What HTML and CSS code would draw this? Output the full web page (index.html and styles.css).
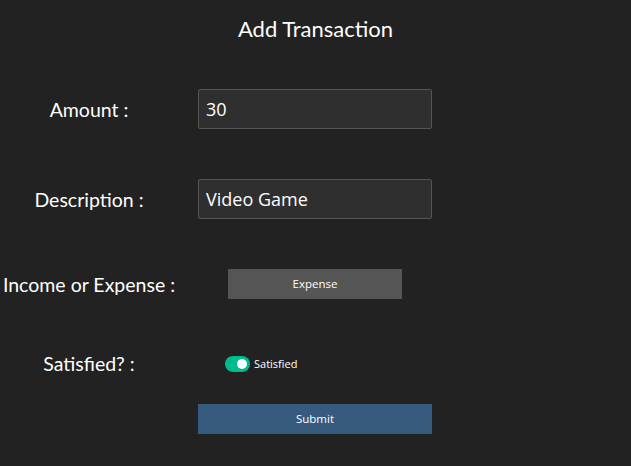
FILE: index.html
```html
<!DOCTYPE html>
<html>
<head>
<meta charset="utf-8">
<link rel="stylesheet" href="styles.css">
</head>
<body>
<div class="page">
  <h1 class="title">Add Transaction</h1>
  <div class="form">
    <div class="row row-amount">
      <div class="label">Amount :</div>
      <div class="field"><div class="input">30</div></div>
    </div>
    <div class="row row-desc">
      <div class="label">Description :</div>
      <div class="field"><div class="input">Video Game</div></div>
    </div>
    <div class="row row-type">
      <div class="label">Income or Expense :</div>
      <div class="field field-type"><div class="btn btn-secondary">Expense</div></div>
    </div>
    <div class="row row-sat">
      <div class="label">Satisfied? :</div>
      <div class="field field-sat">
        <span class="switch"><span class="knob"></span></span>
        <span class="switch-label">Satisfied</span>
      </div>
    </div>
    <div class="row row-submit">
      <div class="label"></div>
      <div class="field"><div class="btn btn-primary">Submit</div></div>
    </div>
  </div>
</div>
</body>
</html>
```

FILE: styles.css
```css
html, body {
  margin: 0;
  padding: 0;
  background: #222222;
  color: #ffffff;
  width: 631px;
  height: 466px;
  overflow: hidden;
}
.page {
  display: flex;
  flex-direction: column;
}
.title {
  margin: 0;
  height: 58px;
  line-height: 58px;
  text-align: center;
  font-family: "Lato", sans-serif;
  font-weight: 400;
  font-size: 22px;
  color: #ffffff;
}
.form {
  display: flex;
  flex-direction: column;
}
.row {
  display: grid;
  grid-template-columns: 178px 234px;
  column-gap: 20px;
  align-items: center;
}
.label {
  text-align: center;
  font-family: "Lato", sans-serif;
  font-size: 19.5px;
  color: #ffffff;
}
.row-amount { margin-top: 31px; height: 40px; }
.row-desc { margin-top: 50px; height: 40px; }
.row-type { margin-top: 50px; height: 30px; }
.row-sat { margin-top: 53px; height: 16px; }
.row-submit { margin-top: 36px; height: 30px; }

.input {
  box-sizing: border-box;
  height: 40px;
  border: 1px solid #555555;
  border-radius: 2px;
  background: #2f2f2f;
  padding: 0 7px;
  line-height: 38px;
  font-family: "Open Sans", sans-serif;
  font-size: 18px;
  color: #ffffff;
}
.field-type {
  display: flex;
  justify-content: center;
}
.btn {
  box-sizing: border-box;
  height: 30px;
  line-height: 30px;
  text-align: center;
  font-family: "Open Sans", sans-serif;
  font-size: 11.5px;
  color: #ffffff;
}
.btn-secondary {
  width: 174px;
  background: #555555;
}
.btn-primary {
  width: 234px;
  background: #375a7f;
}
.field-sat {
  display: flex;
  align-items: center;
  padding-left: 27px;
  height: 16px;
}
.switch {
  box-sizing: border-box;
  width: 25px;
  height: 16px;
  border-radius: 8px;
  background: #00bc8c;
  display: flex;
  align-items: center;
  justify-content: flex-end;
  padding-right: 3px;
}
.knob {
  width: 10px;
  height: 10px;
  border-radius: 50%;
  background: #ffffff;
}
.switch-label {
  margin-left: 4px;
  font-family: "Open Sans", sans-serif;
  font-size: 11px;
  color: #ffffff;
}
```
